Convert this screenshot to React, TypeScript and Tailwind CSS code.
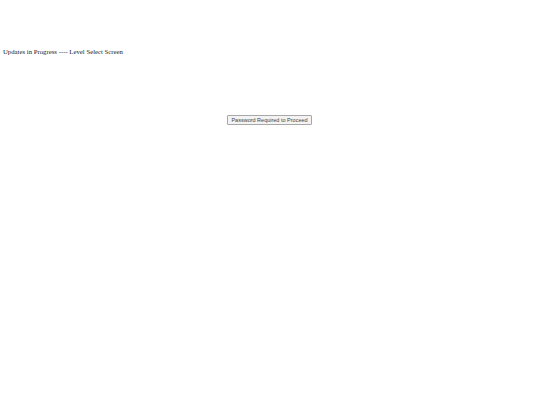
export default function App() {
  return (
    <div className="min-h-[405px] w-[540px] bg-white">
      <div
        className="pt-[48px] pl-[3px] text-[6.75px] leading-[8px] text-[#222]"
        style={{ fontFamily: '"Liberation Serif", "Times New Roman", serif' }}
      >
        Updates in Progress ---- Level Select Screen
      </div>
      <div className="flex justify-center pt-[59px] pr-[1px]">
        <button
          className="h-[10px] w-[85px] border border-[#a8a8a8] bg-[#f3f3f3] px-[2px] text-[5.5px] leading-[8px] text-[#444] rounded-[1px]"
          style={{ fontFamily: '"Liberation Sans", Arial, sans-serif' }}
        >
          Password Required to Proceed
        </button>
      </div>
    </div>
  );
}
